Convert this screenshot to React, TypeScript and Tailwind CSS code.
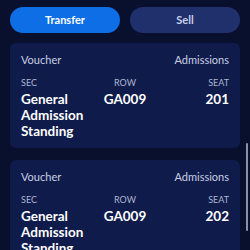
const tickets = [
  { sec: "General Admission Standing", row: "GA009", seat: "201" },
  { sec: "General Admission Standing", row: "GA009", seat: "202" },
]

const TicketCard = ({ sec, row, seat }: { sec: string; row: string; seat: string }) => {
  return (
    <div className="shrink-0 rounded-md bg-[#0f1b4b] px-[11px] pt-[9px] pb-[9px]">
      <div className="flex justify-between text-[11px] leading-4 text-[#c9cfe3]">
        <span>Voucher</span>
        <span>Admissions</span>
      </div>
      <div className="mt-[9px] grid grid-cols-3 text-[9px] leading-3 text-[#aeb6d0]">
        <span>SEC</span>
        <span className="text-center">ROW</span>
        <span className="text-right">SEAT</span>
      </div>
      <div className="mt-[2px] grid grid-cols-3 text-[13.5px] font-bold leading-4 text-white">
        <span>{sec}</span>
        <span className="text-center">{row}</span>
        <span className="text-right">{seat}</span>
      </div>
    </div>
  )
}

export default function App() {
  return (
    <main
      className="relative h-[250px] w-[250px] overflow-hidden bg-[#08102d]"
      style={{ fontFamily: "Lato, 'Noto Sans', sans-serif" }}
    >
      <div className="flex gap-[10px] px-[10px] pt-[7px]">
        <button className="h-[26px] flex-1 rounded-full bg-[#0d6ee6] text-[11px] font-bold text-white">
          Transfer
        </button>
        <button className="h-[26px] flex-1 rounded-full bg-[#1f306d] text-[11px] font-bold text-[#c9d0e8]">
          Sell
        </button>
      </div>
      <div className="mt-[10px] flex flex-col gap-[12px] px-[10px]">
        {tickets.map((t) => (
          <TicketCard key={t.seat} {...t} />
        ))}
      </div>
      <div className="absolute top-[143px] left-[246px] h-[88px] w-[2px] rounded-full bg-[#8a90a6]" />
    </main>
  )
}
